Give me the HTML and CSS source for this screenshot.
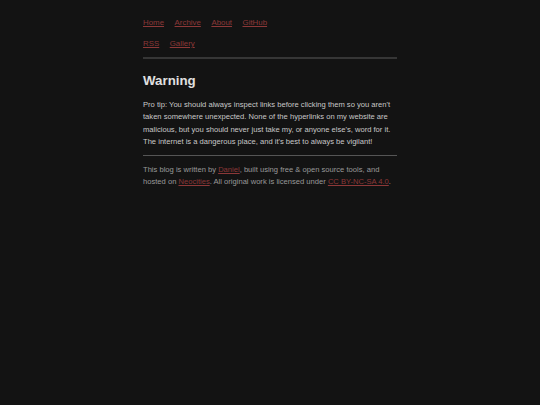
FILE: index.html
```html
<!DOCTYPE html>
<html>
<head>
<meta charset="utf-8">
<link rel="stylesheet" href="styles.css">
</head>
<body>
<div class="page">
  <nav class="nav">
    <ul class="nav-row">
      <li><a href="#">Home</a></li>
      <li><a href="#">Archive</a></li>
      <li><a href="#">About</a></li>
      <li><a href="#">GitHub</a></li>
    </ul>
    <ul class="nav-row">
      <li><a href="#">RSS</a></li>
      <li><a href="#">Gallery</a></li>
    </ul>
  </nav>
  <main class="main">
    <h1 class="title">Warning</h1>
    <p class="text">Pro tip: You should always inspect links before clicking them so you aren't taken somewhere unexpected. None of the hyperlinks on my website are malicious, but you should never just take my, or anyone else's, word for it. The internet is a dangerous place, and it's best to always be vigilant!</p>
  </main>
  <footer class="footer">
    <p class="foot-text">This blog is written by <a href="#">Daniel</a>, built using free &amp; open source tools, and hosted on <a href="#">Neocities</a>. All original work is licensed under <a href="#">CC BY-NC-SA 4.0</a>.</p>
  </footer>
</div>
</body>
</html>
```
FILE: styles.css
```css
html, body {
  margin: 0;
  padding: 0;
  background: #131313;
}
body {
  font-family: "Liberation Sans", Arial, sans-serif;
  font-size: 7.6px;
  color: #c8c8c8;
}
.page {
  width: 254px;
  margin: 0 auto;
  padding-top: 17px;
}
a {
  color: #8c3838;
  text-decoration: underline;
}
.nav {
  border-bottom: 2px solid #363636;
  padding-bottom: 7px;
  font-size: 7.9px;
}
.nav-row {
  list-style: none;
  margin: 0;
  padding: 0;
  display: flex;
  gap: 10.5px;
  line-height: 12px;
}
.nav-row + .nav-row {
  margin-top: 9px;
}
.main {
  padding-top: 14px;
  padding-bottom: 6px;
  border-bottom: 1px solid #555;
}
.title {
  margin: 0 0 10px;
  font-size: 13.3px;
  font-weight: bold;
  line-height: 16px;
  color: #e0e0e0;
}
.text {
  margin: 0;
  line-height: 12.4px;
}
.footer {
  padding-top: 8px;
}
.foot-text {
  margin: 0;
  line-height: 12.4px;
  color: #999;
}
```
